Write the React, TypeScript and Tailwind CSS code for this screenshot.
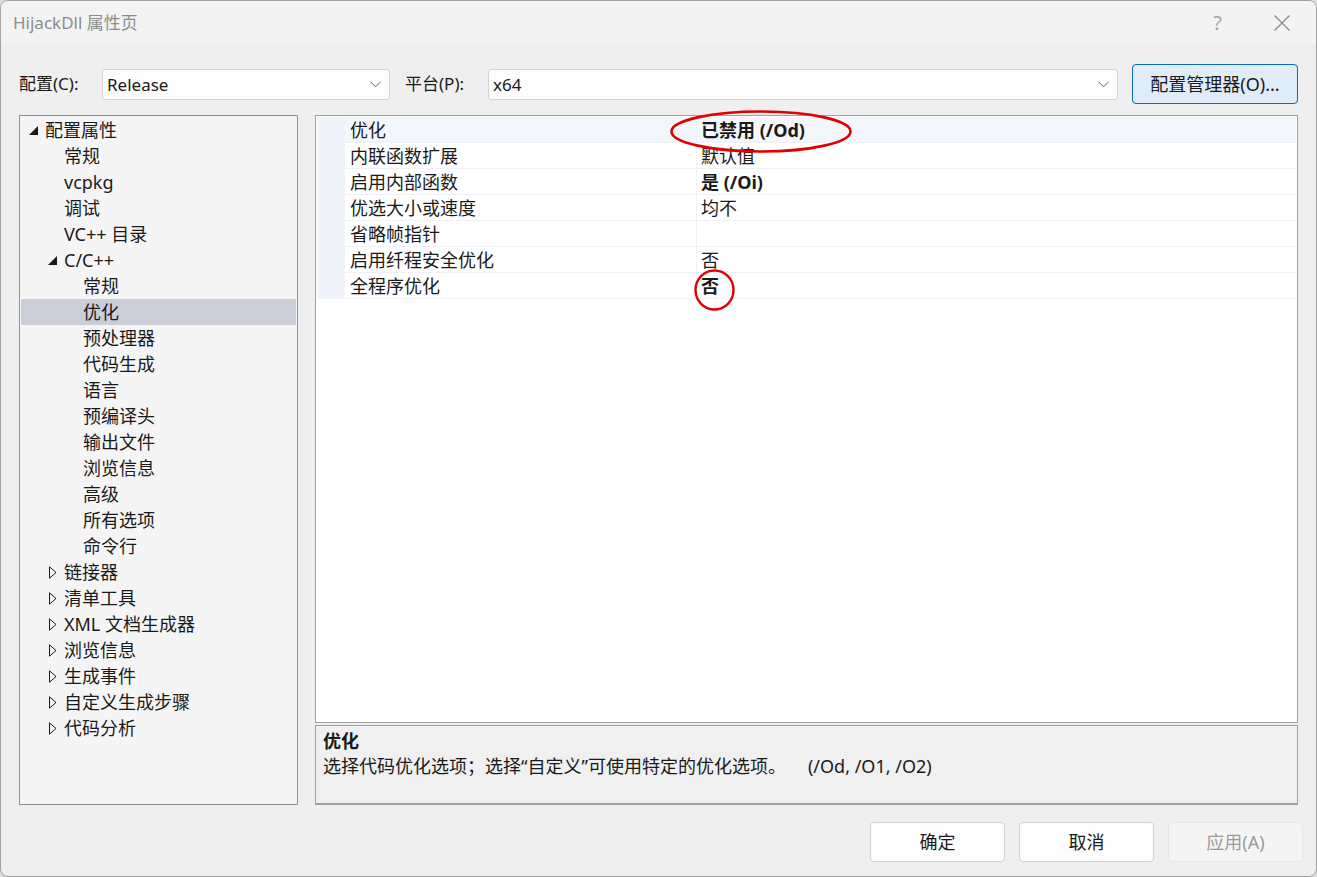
import React from "react";

type TreeItem = {
  label: string;
  level: number;
  arrow?: "open" | "closed";
  selected?: boolean;
};

const treeItems: TreeItem[] = [
  { label: "配置属性", level: 0, arrow: "open" },
  { label: "常规", level: 1 },
  { label: "vcpkg", level: 1 },
  { label: "调试", level: 1 },
  { label: "VC++ 目录", level: 1 },
  { label: "C/C++", level: 1, arrow: "open" },
  { label: "常规", level: 2 },
  { label: "优化", level: 2, selected: true },
  { label: "预处理器", level: 2 },
  { label: "代码生成", level: 2 },
  { label: "语言", level: 2 },
  { label: "预编译头", level: 2 },
  { label: "输出文件", level: 2 },
  { label: "浏览信息", level: 2 },
  { label: "高级", level: 2 },
  { label: "所有选项", level: 2 },
  { label: "命令行", level: 2 },
  { label: "链接器", level: 1, arrow: "closed" },
  { label: "清单工具", level: 1, arrow: "closed" },
  { label: "XML 文档生成器", level: 1, arrow: "closed" },
  { label: "浏览信息", level: 1, arrow: "closed" },
  { label: "生成事件", level: 1, arrow: "closed" },
  { label: "自定义生成步骤", level: 1, arrow: "closed" },
  { label: "代码分析", level: 1, arrow: "closed" },
];

const properties = [
  { name: "优化", value: "已禁用 (/Od)", bold: true },
  { name: "内联函数扩展", value: "默认值" },
  { name: "启用内部函数", value: "是 (/Oi)", bold: true },
  { name: "优选大小或速度", value: "均不" },
  { name: "省略帧指针", value: "" },
  { name: "启用纤程安全优化", value: "否" },
  { name: "全程序优化", value: "否", bold: true },
];

const indent = ["pl-[24px]", "pl-[43px]", "pl-[62px]"];

function Chevron() {
  return (
    <svg width="11" height="7" viewBox="0 0 11 7" className="shrink-0">
      <path d="M0.5 0.8 L5.5 5.8 L10.5 0.8" fill="none" stroke="#5f5f5f" strokeWidth="1" />
    </svg>
  );
}

function Arrow({ kind }: { kind: "open" | "closed" }) {
  if (kind === "open") {
    return (
      <svg width="9" height="9" viewBox="0 0 9 9" className="absolute left-[-16px] top-[9px]">
        <path d="M9 0 L9 9 L0 9 Z" fill="#1a1a1a" />
      </svg>
    );
  }
  return (
    <svg width="8" height="13" viewBox="0 0 8 13" className="absolute left-[-15px] top-[7px]">
      <path d="M0.5 0.8 L7 6.5 L0.5 12.2 Z" fill="none" stroke="#1a1a1a" strokeWidth="1" />
    </svg>
  );
}

function Select({ value, className }: { value: string; className: string }) {
  return (
    <div
      className={`flex h-[31px] items-center justify-between rounded-[3px] border border-[#d2d2d2] bg-[#fdfdfd] pl-[4px] pr-[8px] ${className}`}
    >
      <span className="text-[17px] leading-[29px] text-[#1a1a1a]">{value}</span>
      <Chevron />
    </div>
  );
}

function DialogButton({ label, disabled }: { label: string; disabled?: boolean }) {
  return (
    <div
      className={`flex h-[40px] w-[135px] items-center justify-center rounded-[4px] border text-[18px] ${
        disabled
          ? "border-[#e6e6e6] bg-[#f5f5f5] text-[#9b9b9b]"
          : "border-[#d0d0d0] bg-[#fdfdfd] text-[#1a1a1a]"
      }`}
    >
      {label}
    </div>
  );
}

export default function App() {
  return (
    <div className="h-[877px] w-[1317px] bg-[#dcdcdc]">
      <div
        className="flex h-full w-full flex-col overflow-hidden rounded-[8px] border border-[#a3a3a3] bg-[#efefef] text-[#1a1a1a]"
        style={{ fontFamily: '"Noto Sans", "Noto Sans CJK SC", sans-serif' }}
      >
        {/* title bar */}
        <div className="flex h-[43px] shrink-0 items-center justify-between bg-[#f3f3f3] pl-[12px] pr-[26px]">
          <span className="text-[17px] text-[#8c8c8c]">HijackDll 属性页</span>
          <div className="flex items-center gap-[52px]">
            <span className="text-[20px] text-[#a8a8a8]">?</span>
            <svg width="16" height="16" viewBox="0 0 16 16">
              <path d="M0.5 0.5 L15.5 15.5 M15.5 0.5 L0.5 15.5" stroke="#8a8a8a" strokeWidth="1.3" />
            </svg>
          </div>
        </div>

        <div className="flex flex-1 flex-col pl-[18px] pr-[13px] pt-[20px]">
          {/* configuration row */}
          <div className="flex h-[40px] items-center pr-[5px]">
            <span className="w-[83px] text-[17px]">配置(C):</span>
            <Select value="Release" className="w-[288px]" />
            <span className="ml-[15px] w-[83px] text-[17px]">平台(P):</span>
            <Select value="x64" className="w-[630px]" />
            <div className="ml-auto flex h-[40px] w-[166px] items-center justify-center rounded-[4px] border border-[#0a67c2] bg-[#e0ecf8] text-[18px]">
              配置管理器(O)...
            </div>
          </div>

          {/* main area */}
          <div className="mt-[11px] flex h-[690px] gap-[17px] pr-[5px]">
            {/* tree */}
            <div className="w-[279px] shrink-0 border border-[#8c9099] bg-[#f5f5f5] pt-px">
              {treeItems.map((item, i) => (
                <div
                  key={i}
                  className={`mx-px h-[26px] ${item.selected ? "bg-[#cbcdd9]" : ""} ${indent[item.level]}`}
                >
                  <div className="relative text-[18px] leading-[27px]">
                    {item.arrow && <Arrow kind={item.arrow} />}
                    {item.label}
                  </div>
                </div>
              ))}
            </div>

            {/* right side */}
            <div className="flex flex-1 flex-col">
              <div className="relative flex-1 border border-[#a0a0a0] bg-white p-px">
                {properties.map((p, i) => (
                  <div key={i} className="flex h-[26px]">
                    <div className="w-[28px] bg-[#f0f4fa]" />
                    <div
                      className={`flex flex-1 border-b border-[#f0f1f6] ${i === 0 ? "bg-[#f3f6fb]" : ""}`}
                    >
                      <div className="w-[352px] border-r border-[#f0f1f6] pl-[5px] text-[18px] leading-[26px]">
                        {p.name}
                      </div>
                      <div
                        className={`flex-1 pl-[4px] text-[18px] leading-[26px] ${p.bold ? "font-bold" : ""}`}
                      >
                        {p.value}
                      </div>
                    </div>
                  </div>
                ))}

                {/* red annotations */}
                <svg
                  width="184"
                  height="45"
                  viewBox="0 0 184 45"
                  className="pointer-events-none absolute left-[353px] top-[-7px]"
                >
                  <ellipse cx="92" cy="22.5" rx="89.5" ry="20" fill="none" stroke="#e10000" strokeWidth="2.6" />
                </svg>
                <svg
                  width="43"
                  height="44"
                  viewBox="0 0 43 44"
                  className="pointer-events-none absolute left-[377px] top-[152px]"
                >
                  <ellipse cx="21.5" cy="22" rx="19" ry="19.5" fill="none" stroke="#e10000" strokeWidth="2.4" />
                </svg>
              </div>

              {/* description */}
              <div className="mt-[2px] h-[80px] border-x border-t border-b-2 border-[#a0a0a0] bg-[#f0f0f0] px-[7px] pt-[3px]">
                <div className="text-[18px] font-bold leading-[25px]">优化</div>
                <div className="text-[18px] leading-[25px]">
                  选择代码优化选项；选择“自定义”可使用特定的优化选项。
                  <span className="ml-[22px]">(/Od, /O1, /O2)</span>
                </div>
              </div>
            </div>
          </div>

          {/* buttons */}
          <div className="mt-[17px] flex justify-end gap-[14px]">
            <DialogButton label="确定" />
            <DialogButton label="取消" />
            <DialogButton label="应用(A)" disabled />
          </div>
        </div>
      </div>
    </div>
  );
}
